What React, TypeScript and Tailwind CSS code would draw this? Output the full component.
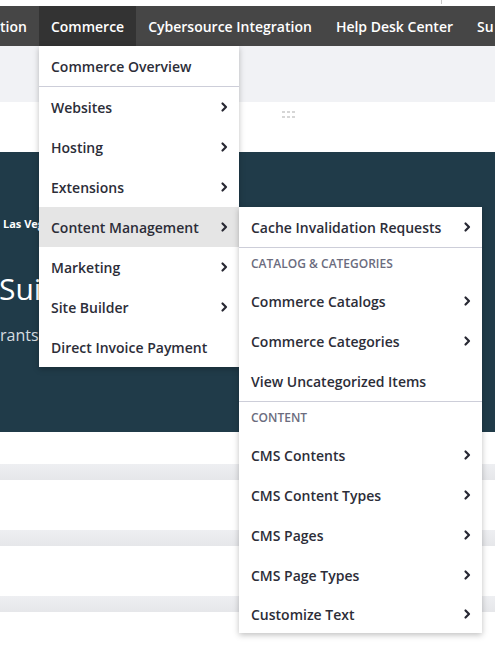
import React from "react";

const font = { fontFamily: '"Open Sans", "Noto Sans", sans-serif' };

function Chevron() {
  return (
    <svg width={8} height={12} viewBox="0 0 8 12" className="text-[#272833]">
      <path d="M2.5 2.5l3.5 3.5-3.5 3.5" fill="none" stroke="currentColor" strokeWidth={2.2} strokeLinecap="round" strokeLinejoin="round" />
    </svg>
  );
}

function Item({ label, sub, active }: { label: string; sub?: boolean; active?: boolean }) {
  return (
    <div
      className={`flex h-10 items-center justify-between pl-3 pr-[11px] text-[14px] font-semibold text-[#2c2d38] ${
        active ? "bg-[#e5e5e5]" : ""
      }`}
    >
      <span>{label}</span>
      {sub && <Chevron />}
    </div>
  );
}

function Header({ label }: { label: string }) {
  return (
    <div className="flex h-[33px] items-center px-3 pb-[1px] text-[12px] font-semibold uppercase text-[#6b6c7e]">
      {label}
    </div>
  );
}

export default function App() {
  return (
    <div className="relative h-[646px] w-[495px] overflow-hidden bg-white" style={font}>
      <div className="relative h-[6px] bg-white">
        <div className="absolute left-[441px] top-0 h-[4px] w-px bg-[#c8c8c8]" />
      </div>
      <nav className="flex h-10 items-center overflow-hidden bg-[#464646] text-[14px] font-semibold text-white whitespace-nowrap">
        <div className="flex h-full items-center pr-3">tion</div>
        <div className="flex h-full items-center bg-[#333333] px-3">Commerce</div>
        <div className="flex h-full items-center px-3">Cybersource Integration</div>
        <div className="flex h-full items-center px-3">Help Desk Center</div>
        <div className="flex h-full items-center pl-3">Su</div>
      </nav>
      <div className="h-[56px] bg-[#f1f2f5]" />
      <div className="flex h-[50px] justify-center bg-white pt-[9px]">
        <div className="ml-[82px] grid h-[7px] w-[13px] grid-cols-3 gap-x-[2px] gap-y-[3px]">
          {Array.from({ length: 6 }).map((_, i) => (
            <div key={i} className="h-[2px] w-[3px] bg-[#d6d6d6]" />
          ))}
        </div>
      </div>
      <div className="h-[280px] bg-[#203b49] text-white">
        <div className="pl-[3px] pt-[64px] text-[11px] font-bold leading-[15px]">Las Vegas</div>
        <div className="-ml-px mt-[43px] text-[30px] leading-none">Suite</div>
        <div className="mt-[21px] text-[16px] leading-5 text-[#d7dde0]">rants</div>
      </div>
      <div className="h-[32px] bg-white" />
      <div className="h-[16px] bg-gradient-to-b from-[#eeeff2] to-[#e6e7ea]" />
      <div className="h-[50px] bg-white" />
      <div className="h-[16px] bg-gradient-to-b from-[#eeeff2] to-[#e6e7ea]" />
      <div className="h-[50px] bg-white" />
      <div className="h-[16px] bg-gradient-to-b from-[#eeeff2] to-[#e6e7ea]" />

      <div className="absolute left-[39px] top-[46px] w-[200px] bg-white shadow-[0_2px_6px_rgba(0,0,0,0.25)]">
        <Item label="Commerce Overview" />
        <div className="h-px bg-[#cdced9]" />
        <Item label="Websites" sub />
        <Item label="Hosting" sub />
        <Item label="Extensions" sub />
        <Item label="Content Management" sub active />
        <Item label="Marketing" sub />
        <Item label="Site Builder" sub />
        <Item label="Direct Invoice Payment" />
      </div>

      <div className="absolute left-[239px] top-[207px] w-[243px] bg-white shadow-[0_2px_6px_rgba(0,0,0,0.25)]">
        <Item label="Cache Invalidation Requests" sub />
        <div className="h-px bg-[#cdced9]" />
        <Header label="Catalog & Categories" />
        <Item label="Commerce Catalogs" sub />
        <Item label="Commerce Categories" sub />
        <Item label="View Uncategorized Items" />
        <div className="h-px bg-[#cdced9]" />
        <Header label="Content" />
        <Item label="CMS Contents" sub />
        <Item label="CMS Content Types" sub />
        <Item label="CMS Pages" sub />
        <Item label="CMS Page Types" sub />
        <div className="flex h-[38px] items-center justify-between pl-3 pr-[11px] text-[14px] font-semibold text-[#2c2d38]">
          <span>Customize Text</span>
          <Chevron />
        </div>
      </div>
    </div>
  );
}
